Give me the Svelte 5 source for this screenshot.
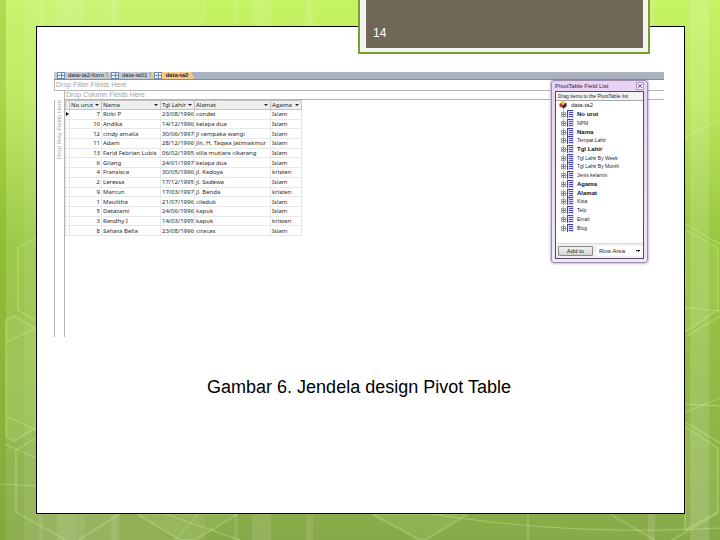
<script>
  const tabs = ["data-ta2-form", "data-ta01", "data-ta2"];
  let active = $state("data-ta2");
  let area = $state("Row Area");

  const columns = ["No urut", "Nama", "Tgl Lahir", "Alamat", "Agama"];
  const rows = [
    [7, "Rizki P", "23/08/1996", "condet", "Islam"],
    [10, "Andika", "14/12/1996", "kelapa dua", "Islam"],
    [12, "cindy amalia", "30/06/1997", "jl cempaka wangi", "Islam"],
    [11, "Adam", "28/12/1996", "Jln. H. Taqwa Jatimakmur", "Islam"],
    [13, "Farid Febrian Lubis", "06/02/1995", "villa mutiara cikarang", "Islam"],
    [6, "Gilang", "24/01/1997", "kelapa dua", "Islam"],
    [4, "Fransisca", "30/05/1996", "jl. Kedoya", "kristen"],
    [2, "Leressa", "17/12/1995", "jl. Sadewa", "Islam"],
    [9, "Marcun", "17/03/1997", "jl. Benda", "kristen"],
    [1, "Maulitha", "21/07/1996", "cileduk", "Islam"],
    [5, "Detazami", "24/06/1996", "kapuk", "Islam"],
    [3, "Randhy I", "14/03/1995", "kapuk", "kristen"],
    [8, "Sahara Bella", "23/08/1996", "ciracas", "Islam"],
  ];

  const fields = [
    { name: "No urut", used: true },
    { name: "NPM" },
    { name: "Nama", used: true },
    { name: "Tempat Lahir" },
    { name: "Tgl Lahir", used: true },
    { name: "Tgl Lahir By Week" },
    { name: "Tgl Lahir By Month" },
    { name: "Jenis kelamin" },
    { name: "Agama", used: true },
    { name: "Alamat", used: true },
    { name: "Kota" },
    { name: "Telp" },
    { name: "Email" },
    { name: "Blog" },
  ];
</script>

<main class="slide">
  <svg class="backdrop" viewBox="0 0 720 540" preserveAspectRatio="none" aria-hidden="true">
    <g fill="#fff">
      <rect x="6" width="18" height="540" opacity="0.06" />
      <rect x="24" width="96" height="540" opacity="0.12" />
      <rect x="39" width="4" height="540" opacity="0.09" />
      <rect x="57" width="20" height="540" opacity="0.1" />
      <rect x="78" width="7" height="540" opacity="0.08" />
      <rect x="111" width="7" height="540" opacity="0.1" />
      <rect x="120" width="85" height="540" opacity="0.07" />
      <rect x="234" width="4" height="540" opacity="0.1" />
      <rect x="252" width="19" height="540" opacity="0.1" />
      <rect x="306" width="7" height="540" opacity="0.1" />
      <rect x="648" width="7" height="540" opacity="0.12" />
      <rect x="690" width="19" height="540" opacity="0.14" />
    </g>
    <rect width="6" height="540" fill="#7eaa1c" opacity="0.3" />
    <g class="shapes">
      <path d="M6 320 14 316 36 328V428L14 441 6 437Z" />
      <path d="M137 514 180 540 195 540 238 514Z" />
      <path d="M372 514 420 540 425 540 468 514Z" />
      <path d="M685 229 718 248V310L685 332Z" />
      <path d="M685 426 718 448V512L685 530Z" />
    </g>
    <g class="wide">
      <path d="M36 238 18 248V310L36 321" />
      <path d="M36 438 16 450V512L66 540M78 540 120 514" />
      <path d="M290 26 305 17 320 26" />
      <path d="M610 514 655 540M672 540 718 513" />
      <path d="M685 224 720 244M685 337 720 316M685 138 720 118M685 422 720 443" />
    </g>
    <g class="thin">
      <path d="M6 342 36 328M6 416 36 430M4 444 36 458M0 484 36 486" />
      <path d="M165 514 240 540M175 540 198 514" />
      <path d="M430 514C500 524 590 535 720 528M528 514V540" />
      <path d="M685 307 720 311M685 404 720 406M685 412 720 398" />
    </g>
  </svg>

  <article class="page">
    <section class="pivot">
      <nav class="tabs">
        {#each tabs as tab}
          <button class="tab" class:active={tab === active} onclick={() => (active = tab)}>
            <svg width="8" height="7" viewBox="0 0 8 7" aria-hidden="true">
              <rect x="0" y="0" width="8" height="7" fill="#6f8dbb" />
              <path d="M1 1H4V3H1ZM1 4H4V6H1ZM5 1H7V3H5ZM5 4H7V6H5Z" fill="#eef4fc" />
            </svg>
            {tab}
          </button>
        {/each}
      </nav>
      <div class="drop filter">Drop Filter Fields Here</div>
      <div class="drop column">Drop Column Fields Here</div>
      <div class="body">
        <div class="row-drop"><span>Drop Row Fields Here</span></div>
        <table>
          <colgroup>
            <col class="c-mark" />
            <col class="c-no" />
            <col class="c-name" />
            <col class="c-date" />
            <col class="c-address" />
            <col class="c-religion" />
          </colgroup>
          <thead>
            <tr>
              <th class="mark"></th>
              {#each columns as column}
                <th scope="col"><div class="head">{column}<i class="arrow"></i></div></th>
              {/each}
            </tr>
          </thead>
          <tbody>
            {#each rows as row, i}
              <tr>
                <td class="mark">{#if i === 0}<i class="pointer"></i>{/if}</td>
                {#each row as cell}
                  <td>{cell}</td>
                {/each}
              </tr>
            {/each}
          </tbody>
        </table>
      </div>

      <aside class="panel">
        <header>
          <h2>PivotTable Field List</h2>
          <button class="close" aria-label="Close">
            <svg width="4" height="4" viewBox="0 0 4 4" aria-hidden="true">
              <path d="M0 0 4 4M4 0 0 4" stroke="#6b5b80" />
            </svg>
          </button>
        </header>
        <div class="inner">
          <p class="hint">Drag items to the PivotTable list</p>
          <ul>
            <li class="root">
              <svg width="8" height="8" viewBox="0 0 8 9" aria-hidden="true">
                <path d="M0 3 4 1 4 8 0 6Z" fill="#c22c2c" />
                <path d="M4 3 8 2V6L4 9Z" fill="#26246e" />
                <path d="M1 2 4 0 7 2 4 5Z" fill="#f5c21c" />
              </svg>
              data-ta2
            </li>
            {#each fields as field}
              <li class:used={field.used}>
                <svg width="13" height="8" viewBox="0 0 13 8" aria-hidden="true">
                  <path d="M2.5 0V8M5 4.500H7" stroke="#b4b4bc" fill="none" />
                  <rect x="0.5" y="2.500" width="4" height="4" fill="#fff" stroke="#a4a4ac" />
                  <path d="M1 4.500H4M2.500 3V6" stroke="#777" />
                  <rect x="6" y="0" width="7" height="8" fill="#dcdcf8" />
                  <path d="M6.500 0V8M6 .5H12" stroke="#45458c" fill="none" />
                  <path d="M8 2.500H12M8 4.500H12M8 6.500H12" stroke="#4a4ad8" />
                </svg>
                {field.name}
              </li>
            {/each}
          </ul>
          <footer>
            <button class="add">Add to</button>
            <select aria-label="Area" bind:value={area}>
              <option>Row Area</option>
              <option>Column Area</option>
              <option>Filter Area</option>
            </select>
          </footer>
        </div>
      </aside>
    </section>

    <p class="caption">Gambar 6. Jendela design Pivot Table</p>
  </article>

  <div class="banner"><span>14</span></div>
</main>

<style>
  :global(body) {
    margin: 0;
  }
  .slide {
    position: relative;
    box-sizing: border-box;
    display: flex;
    min-height: 100vh;
    padding: 26px 35px 26px 36px;
    background: linear-gradient(#c4f364, #bce95c 18%, #98c840 44%, #93bb45 70%, #88a94a);
    font-family: "Liberation Sans", Arial, sans-serif;
    overflow: hidden;
  }
  .backdrop {
    position: absolute;
    inset: 0;
    width: 100%;
    height: 100%;
  }
  .shapes {
    fill: #e0ffb0;
    fill-opacity: 0.08;
    stroke: #e0ffb0;
    stroke-opacity: 0.22;
    stroke-width: 2;
  }
  .wide {
    fill: none;
    stroke: #e0ffb0;
    stroke-opacity: 0.22;
    stroke-width: 2;
  }
  .thin {
    fill: none;
    stroke: #e4ffae;
    stroke-opacity: 0.35;
  }
  .page {
    position: relative;
    flex: 1;
    padding: 45px 20px 20px 17px;
    border: 1px solid #000;
    background: #fff;
  }
  .banner {
    position: absolute;
    top: 0;
    left: calc(50% - 2px);
    right: 70px;
    border: 2px solid #7a9e2f;
    border-top: 0;
    padding: 0 5px 4px 6px;
    background: #f3f3f1;
  }
  .banner span {
    display: block;
    padding: 25px 7px 7px;
    background: #716757;
    color: #fff;
    font-size: 12px;
    line-height: 16px;
  }

  .pivot {
    position: relative;
    display: flex;
    flex-direction: column;
    min-height: 265px;
    font-size: 6px;
    color: #26282c;
  }
  button,
  select {
    font: inherit;
    color: inherit;
    margin: 0;
  }
  .tabs {
    display: flex;
    height: 7px;
    overflow: hidden;
    background: #a9b2be;
    border-bottom: 1px solid #858c96;
  }
  .tab {
    display: flex;
    align-items: center;
    gap: 3px;
    height: 7px;
    padding: 0 4px 1px 3px;
    border: 0;
    background: #c3cad4;
    line-height: 7px;
    clip-path: polygon(0 0, calc(100% - 3px) 0, 100% 100%, 0 100%);
  }
  .tab.active {
    padding-right: 6px;
    background: #f6c988;
    font-weight: bold;
  }
  .drop {
    box-sizing: border-box;
    height: 11px;
    padding-left: 1px;
    border-bottom: 1px solid #b4b4b4;
    border-left: 1px solid #b4b4b4;
    font-size: 7px;
    line-height: 10px;
    color: #a2a2a2;
  }
  .column {
    height: 9px;
    margin-left: 10px;
    line-height: 8px;
  }
  .body {
    flex: 1;
    display: flex;
    align-items: stretch;
  }
  .row-drop {
    box-sizing: border-box;
    width: 11px;
    border: solid #b4b4b4;
    border-width: 0 1px;
    color: #a2a2a2;
    font-size: 6px;
    line-height: 9px;
  }
  .row-drop span {
    writing-mode: vertical-rl;
    transform: rotate(180deg);
    white-space: nowrap;
  }

  table {
    align-self: flex-start;
    table-layout: fixed;
    width: 236px;
    height: 136px;
    border-collapse: collapse;
    font-family: "Noto Sans", sans-serif;
    line-height: 8px;
  }
  .c-mark {
    width: 4px;
  }
  .c-no {
    width: 32px;
  }
  .c-name {
    width: 59px;
  }
  .c-date {
    width: 34px;
  }
  .c-address {
    width: 76px;
  }
  .c-religion {
    width: 31px;
  }
  th,
  td {
    padding: 0 0 0 1px;
    border: 1px solid #e6e8ea;
    text-align: left;
    white-space: nowrap;
    overflow: hidden;
  }
  th {
    border-color: #c4c4c4;
    background: #eeeeee;
    font-weight: normal;
  }
  td:nth-child(2) {
    padding: 0 1px 0 0;
    text-align: right;
  }
  .mark {
    padding: 0;
  }
  .head {
    display: flex;
    align-items: center;
    justify-content: space-between;
    padding-right: 2px;
  }
  .arrow {
    border: 2px solid transparent;
    border-top-color: #222;
    border-bottom: 0;
  }
  .pointer {
    display: block;
    width: 0;
    border: 2px solid transparent;
    border-left: 3px solid #000;
    border-right: 0;
  }

  .panel {
    position: absolute;
    top: 8px;
    right: 16px;
    box-sizing: border-box;
    width: 97px;
    padding: 0 3px 3px;
    border: 1px solid #9c8ea8;
    border-radius: 3px;
    background: linear-gradient(#e9d2f4, #f0e6f6);
    box-shadow: 0 0 3px #8c7c9c;
  }
  header {
    display: flex;
    align-items: center;
    justify-content: space-between;
    height: 10px;
  }
  h2 {
    margin: 0;
    font-size: 6px;
    font-weight: normal;
    color: #33203c;
  }
  .close {
    display: flex;
    padding: 1px;
    border: 1px solid #a898bc;
    border-radius: 1px;
    background: #f4ecfa;
  }
  .inner {
    border: 1px solid #574870;
    background: #fff;
  }
  .hint {
    margin: 0;
    padding-left: 2px;
    border-bottom: 1px solid #a8a8ac;
    background: #f4f4f4;
    font-size: 5px;
    line-height: 8px;
    white-space: nowrap;
  }
  ul {
    display: grid;
    grid-auto-rows: 1fr;
    height: 131px;
    margin: 0;
    padding: 0 0 11px 5px;
    list-style: none;
  }
  li {
    display: flex;
    align-items: center;
    gap: 3px;
    font-size: 5px;
    line-height: 8px;
    white-space: nowrap;
  }
  .root {
    margin-left: -2px;
    gap: 4px;
    font-size: 6px;
  }
  .used {
    font-size: 6px;
    font-weight: bold;
    color: #10142c;
  }
  footer {
    display: flex;
    justify-content: space-between;
    gap: 4px;
    padding: 2px 0 2px 2px;
    border-top: 1px solid #dcdcdc;
    background: #f0f0f0;
  }
  .add {
    width: 36px;
    height: 10px;
    padding: 0;
    border: 1px solid #8a8a8a;
    border-radius: 1px;
    background: linear-gradient(#f4f4f4, #d2d2d2);
    line-height: 8px;
  }
  select {
    flex: 1;
    height: 10px;
    padding: 0 8px 0 2px;
    border: 0;
    appearance: none;
    background:
      linear-gradient(45deg, transparent 50%, #222 50%) right 5px center / 2px 2px no-repeat,
      linear-gradient(-45deg, transparent 50%, #222 50%) right 3px center / 2px 2px no-repeat,
      #fff;
    line-height: 10px;
  }

  .caption {
    margin: 40px 0 0;
    text-align: center;
    font-size: 18px;
    line-height: 20px;
    color: #000;
  }
</style>
